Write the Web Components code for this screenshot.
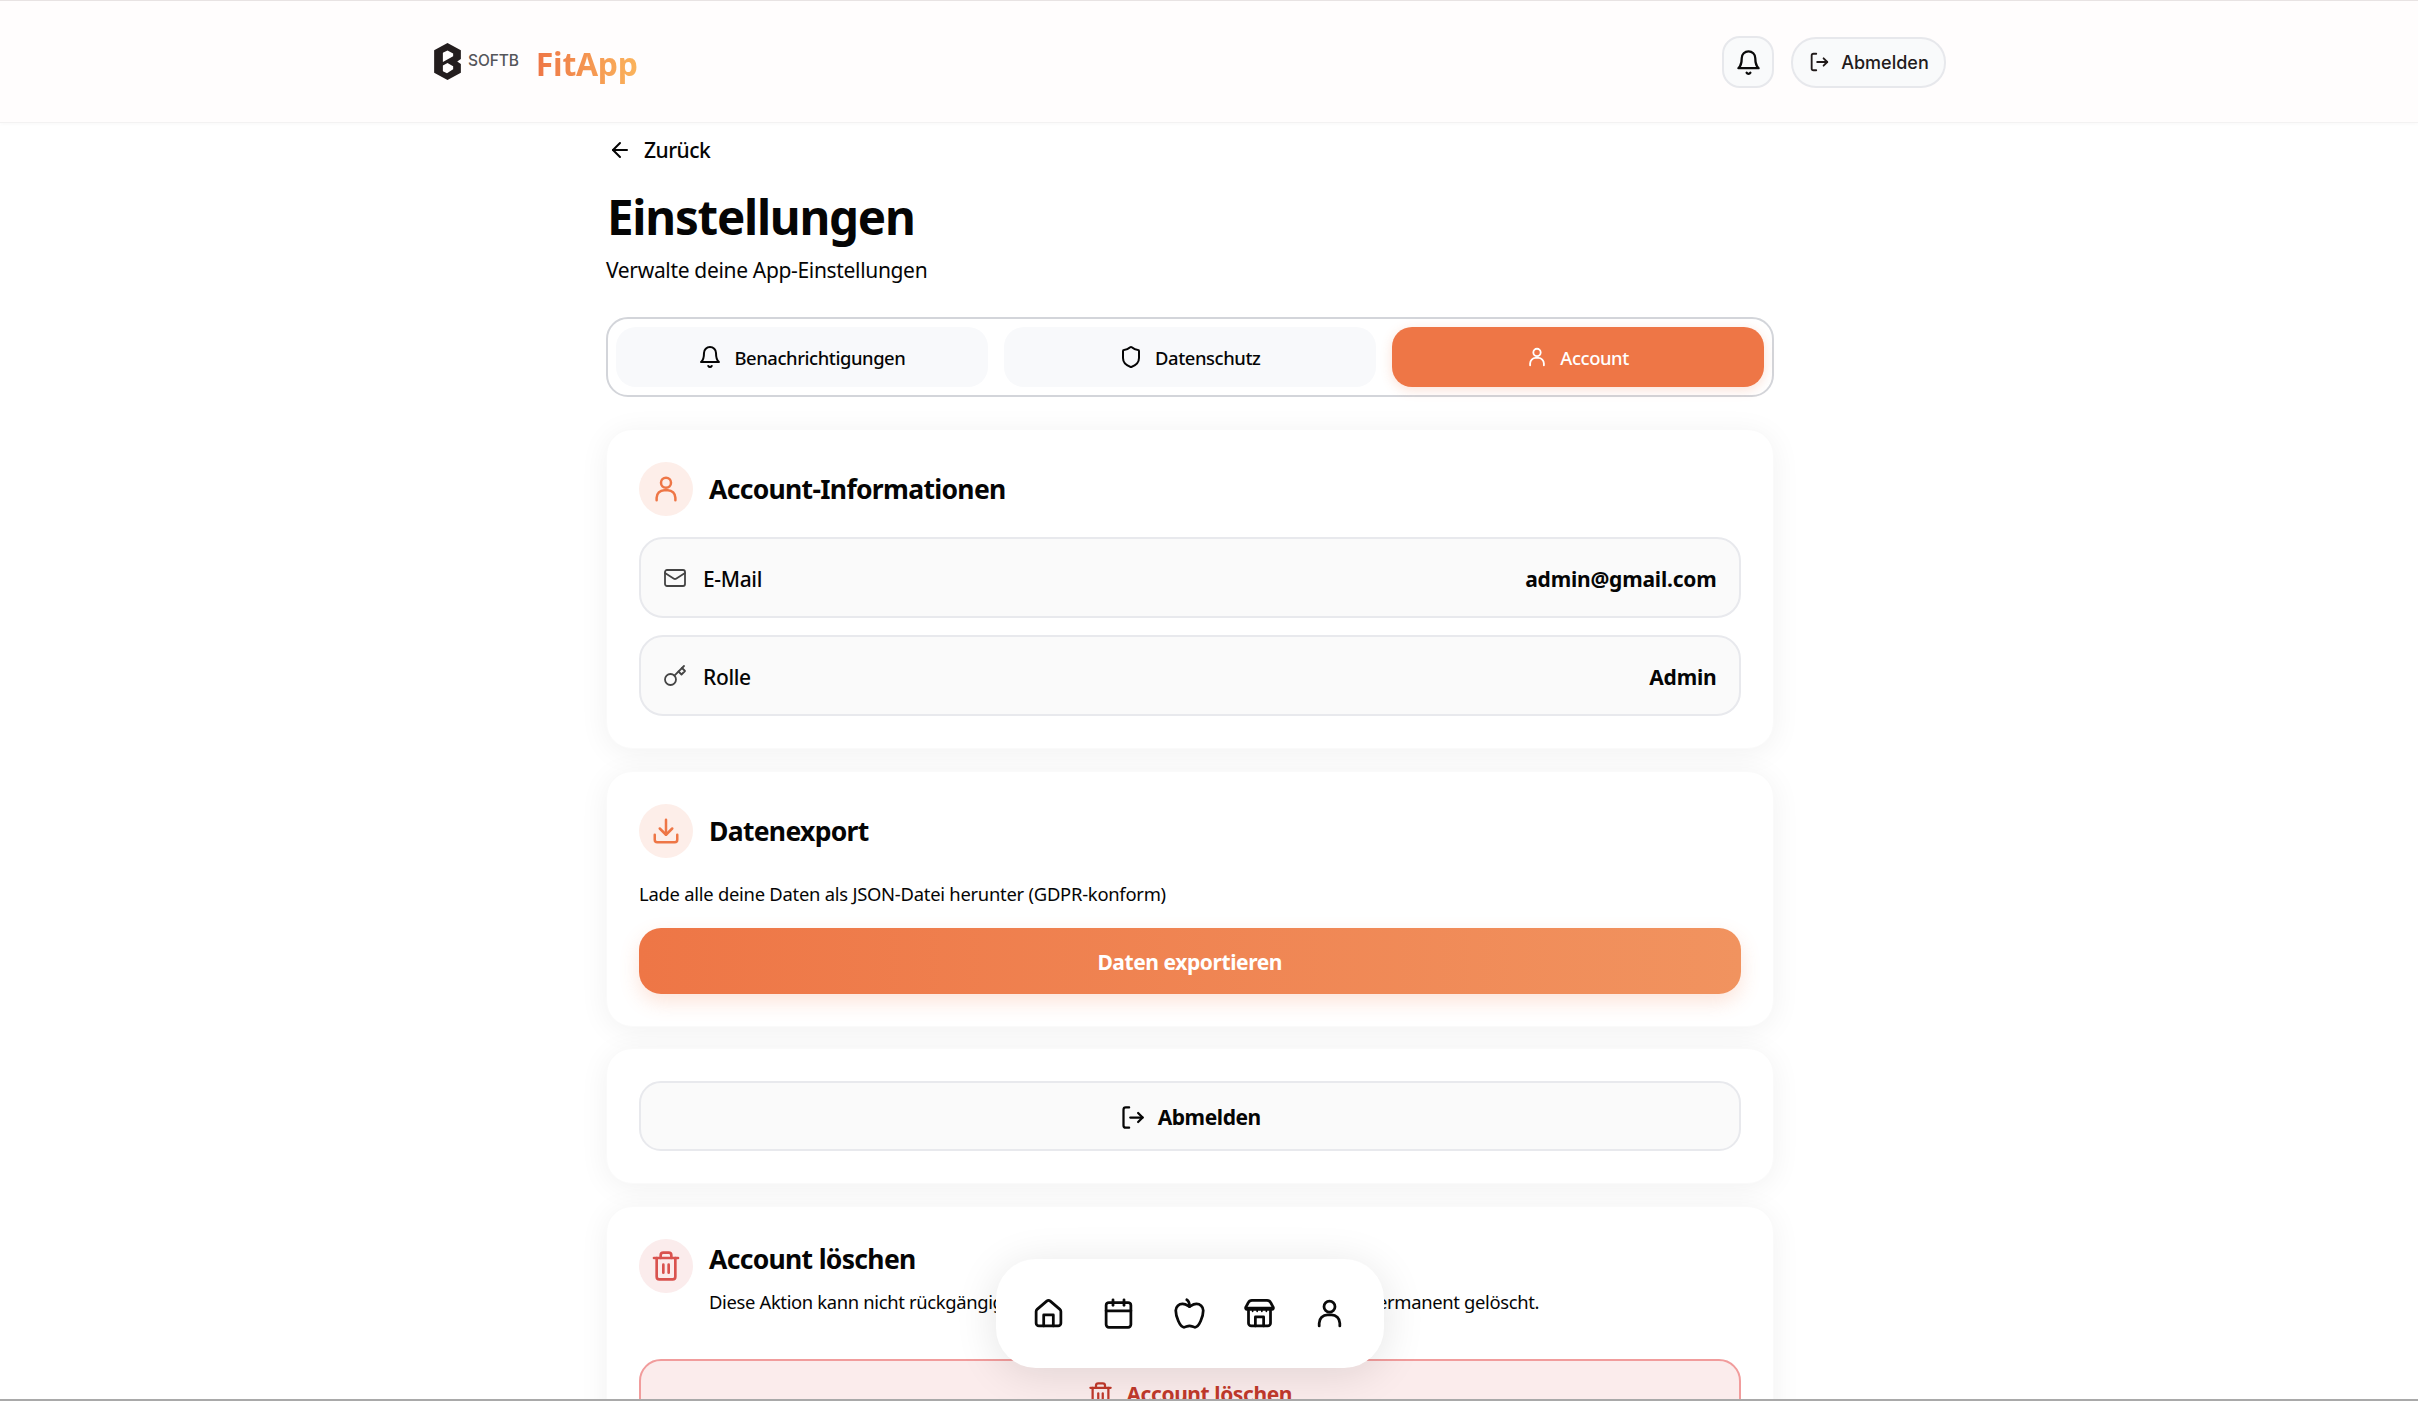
<!DOCTYPE html>
<html lang="de">
<head>
<meta charset="utf-8">
<title>FitApp Einstellungen</title>
<style>
  html, body { margin: 0; height: 1401px; overflow: hidden; background: #fff; }
  body { font-family: "Noto Sans", "Open Sans", sans-serif; color: #050505; }
</style>
</head>
<body>
<fit-header></fit-header>
<settings-page></settings-page>
<bottom-nav></bottom-nav>
<script>
// lucide-artige icons, alle in einem 24er raster
const ICONS = {
  bell: '<path d="M6 8a6 6 0 0 1 12 0c0 7 3 9 3 9H3s3-2 3-9"/><path d="M10.3 21a1.94 1.94 0 0 0 3.4 0"/>',
  shield: '<path d="M20 13c0 5-3.5 7.5-7.66 8.95a1 1 0 0 1-.67-.01C7.5 20.5 4 18 4 13V6a1 1 0 0 1 1-1c2 0 4.5-1.2 6.24-2.72a1.17 1.17 0 0 1 1.52 0C14.51 3.81 17 5 19 5a1 1 0 0 1 1 1z"/>',
  user: '<circle cx="12" cy="7" r="4"/><path d="M4.5 21v-2a6 6 0 0 1 6-6h3a6 6 0 0 1 6 6v2"/>',
  mail: '<rect x="2" y="4" width="20" height="16" rx="2"/><path d="m22 7-8.97 5.7a1.94 1.94 0 0 1-2.06 0L2 7"/>',
  key: '<circle cx="7.5" cy="15.5" r="5.5"/><path d="m21 2-9.6 9.6"/><path d="m15.5 7.5 3 3L22 7l-3-3"/>',
  download: '<path d="M21 15v4a2 2 0 0 1-2 2H5a2 2 0 0 1-2-2v-4"/><path d="m7 10 5 5 5-5"/><path d="M12 15V3"/>',
  logout: '<path d="M9 3H6a2 2 0 0 0-2 2v14a2 2 0 0 0 2 2h3"/><path d="M10 12h11"/><path d="m17 8 4 4-4 4"/>',
  trash: '<path d="M3 6h18"/><path d="M19 6v14a2 2 0 0 1-2 2H7a2 2 0 0 1-2-2V6"/><path d="M8 6V4a2 2 0 0 1 2-2h4a2 2 0 0 1 2 2v2"/><path d="M10 11v6"/><path d="M14 11v6"/>',
  arrow: '<path d="M12 19 5 12l7-7"/><path d="M19 12H5"/>',
  home: '<path d="M3 10.500a2 2 0 0 1 .7-1.500l7-6a2 2 0 0 1 2.600 0l7 6a2 2 0 0 1 .7 1.500V19a2 2 0 0 1-2 2H5a2 2 0 0 1-2-2z"/><path d="M8.500 21v-8h7v8"/>',
  calendar: '<rect x="3" y="4" width="18" height="18" rx="2"/><path d="M16 2v4"/><path d="M8 2v4"/><path d="M3 10h18"/>',
  apple: '<path d="M12 20.940c1.500 0 2.750 1.060 4 1.060 3 0 6-8 6-12.220A4.910 4.910 0 0 0 17 5c-2.220 0-4 1.440-5 2-1-.560-2.780-2-5-2a4.900 4.900 0 0 0-5 4.780C2 14 5 22 8 22c1.250 0 2.500-1.060 4-1.060Z"/><path d="M10 2c1 .5 2 2 2 5"/>',
  // dach mit kleinen zacken am saum
  store: '<path d="M6.500 2.500h11a3 3 0 0 1 2.700 1.700L22 7.500a1 1 0 0 1-1 1.500H3a1 1 0 0 1-1-1.500l1.800-3.300a3 3 0 0 1 2.700-1.700z"/><path d="M2.500 8h19"/><path d="M7 9v1.500M10.300 9v1.500M13.700 9v1.500M17 9v1.500" stroke-width="1.200"/><path d="M4 10v9a2 2 0 0 0 2 2h12a2 2 0 0 0 2-2v-9"/><path d="M9 21v-6.500h6V21"/>'
};

class AppIcon extends HTMLElement {
  connectedCallback() {
    const size = this.getAttribute("size") || 24;
    const stroke = this.getAttribute("stroke") || 2;
    this.attachShadow({ mode: "open" }).innerHTML = `
      <style>
        :host { display: inline-flex; flex: none; width: ${size}px; height: ${size}px; }
        svg { width: 100%; height: 100%; fill: none; stroke: currentColor; stroke-width: ${stroke}; stroke-linecap: round; stroke-linejoin: round; }
      </style>
      <svg viewBox="0 0 24 24">${ICONS[this.getAttribute("name")]}</svg>`;
  }
}

class FitHeader extends HTMLElement {
  constructor() {
    super();
    this.attachShadow({ mode: "open" }).innerHTML = `
    <style>
      :host {
        display: block;
        height: 121px;
        border-top: 1px solid #e8e3e3;
        border-bottom: 1px solid #f3f2f2;
        background: #fffdfd;
        box-shadow: 0 2px 3px rgba(0,0,0,.02);
      }
      .inner {
        width: 1512px;
        height: 100%;
        margin-left: 434px;
        display: flex;
        align-items: center;
        justify-content: space-between;
      }
      .brand { display: flex; align-items: center; }
      .softb {
        font: 500 15.500px Inter, sans-serif;
        color: #55565a;
        margin: 0 17px 3px 7px;
        letter-spacing: -.1px;
      }
      .fit {
        font: 700 32px/1 "Noto Sans", sans-serif;
        letter-spacing: -.3px;
        background: linear-gradient(90deg, #ee7646, #fbb45c);
        -webkit-background-clip: text;
        background-clip: text;
        color: transparent;
        padding: 6px 0 8px;
        margin-top: 7px;
      }
      .actions { display: flex; align-items: center; gap: 17px; margin-top: 1px; }
      .bell, .out {
        box-sizing: border-box;
        display: flex;
        align-items: center;
        justify-content: center;
        height: 52px;
        border: 2px solid #e7e8ec;
        background: #f9fafb;
      }
      .bell { width: 52px; border-radius: 18px; color: #0a0a0a; }
      .out {
        width: 155px;
        height: 51px;
        border-radius: 25px;
        gap: 11px;
        font: 500 18px Inter, sans-serif;
        color: #221b1b;
      }
    </style>
    <div class="inner">
      <div class="brand">
        <svg width="27" height="37" viewBox="0 0 26 36" aria-hidden="true">
          <path fill="#231d1e" fill-rule="evenodd" d="M13 0 26 7v8.500L22.500 18 26 20.500V29l-13 7-13-7V7zM8.500 9.500V18.500L18.500 13V10.200L13 7.200zM8.500 22V27.500L12.500 29.500 18.500 25.500V22.500L13 19.500z"/>
        </svg>
        <span class="softb">SOFTB</span>
        <span class="fit">FitApp</span>
      </div>
      <div class="actions">
        <div class="bell"><app-icon name="bell" size="27" stroke="2"></app-icon></div>
        <div class="out"><app-icon name="logout" size="22" stroke="2"></app-icon><span>Abmelden</span></div>
      </div>
    </div>`;
  }
}

class TabButton extends HTMLElement {
  constructor() {
    super();
    this.attachShadow({ mode: "open" }).innerHTML = `
    <style>
      :host {
        display: flex;
        align-items: center;
        justify-content: center;
        gap: 12px;
        height: 60px;
        border-radius: 20px;
        background: #f8f9fb;
        font-size: 18.400px;
        font-weight: 500;
        letter-spacing: -.42px;
        color: #050505;
      }
      :host([active]) {
        background: #ee7646;
        color: #fff;
        box-shadow: 0 3px 12px rgba(238,118,70,.22);
      }
    </style>
    <slot name="icon"></slot><slot></slot>`;
  }
}

class SettingsTabs extends HTMLElement {
  constructor() {
    super();
    this.attachShadow({ mode: "open" }).innerHTML = `
    <style>
      :host {
        display: grid;
        grid-template-columns: repeat(3, 1fr);
        gap: 16px;
        box-sizing: border-box;
        height: 80px;
        padding: 8px;
        border: 2px solid #d3d5da;
        border-radius: 22px;
        background: #fff;
      }
    </style>
    <slot></slot>`;
  }
}

class SettingsCard extends HTMLElement {
  constructor() {
    super();
    this.attachShadow({ mode: "open" }).innerHTML = `
    <style>
      :host {
        display: block;
        box-sizing: border-box;
        padding: 32px;
        border: 1px solid #fafafa;
        border-radius: 26px;
        background: #fff;
        box-shadow: 0 4px 30px rgba(0,0,0,.06);
      }
      .head { display: flex; align-items: center; gap: 16px; }
      :host([danger]) .head { align-items: flex-start; }
      .badge {
        width: 54px;
        height: 54px;
        flex: none;
        border-radius: 50%;
        display: flex;
        align-items: center;
        justify-content: center;
        background: #fdeee9;
        color: #ee7646;
      }
      :host([danger]) .badge { background: #fbecec; color: #d9534f; }
      h2 {
        margin: 0;
        font-size: 26.500px;
        font-weight: 700;
        letter-spacing: -.68px;
        line-height: 40px;
        color: #050505;
      }
      :host(:not([heading])) .head { display: none; }
    </style>
    <div class="head">
      <div class="badge"><slot name="icon"></slot></div>
      <div>
        <h2>${this.getAttribute("heading") || ""}</h2>
        <slot name="note"></slot>
      </div>
    </div>
    <slot></slot>`;
  }
}

class InfoRow extends HTMLElement {
  constructor() {
    super();
    this.attachShadow({ mode: "open" }).innerHTML = `
    <style>
      :host {
        display: flex;
        align-items: center;
        gap: 16px;
        box-sizing: border-box;
        height: 81px;
        padding: 2px 22px 0;
        border: 2px solid #e8e9ed;
        border-radius: 24px;
        background: #fafafa;
        font-size: 21px;
        letter-spacing: -.35px;
        font-weight: 500;
        color: #050505;
      }
      .value { margin-left: auto; font-weight: 700; letter-spacing: -.2px; }
      ::slotted(app-icon) { color: #444; margin-top: -2px; }
    </style>
    <slot name="icon"></slot>
    <span>${this.getAttribute("label")}</span>
    <span class="value">${this.getAttribute("value")}</span>`;
  }
}

class ActionButton extends HTMLElement {
  constructor() {
    super();
    this.attachShadow({ mode: "open" }).innerHTML = `
    <style>
      :host {
        display: flex;
        align-items: center;
        justify-content: center;
        gap: 12px;
        box-sizing: border-box;
        height: 66px;
        padding-top: 2px;
        border-radius: 22px;
        font-size: 21px;
        font-weight: 700;
        letter-spacing: -.42px;
      }
      :host([kind="primary"]) {
        background: linear-gradient(90deg, #ee7646, #f1935f);
        color: #fff;
        box-shadow: 0 8px 20px rgba(238,118,70,.2);
      }
      :host([kind="plain"]) {
        height: 70px;
        border: 2px solid #e8e9ed;
        background: #fafafa;
        color: #050505;
      }
      :host([kind="danger"]) {
        height: 69px;
        border: 2px solid #f19c9c;
        background: #fbecec;
        color: #c0392b;
      }
    </style>
    <slot name="icon"></slot><slot></slot>`;
  }
}

class SettingsPage extends HTMLElement {
  constructor() {
    super();
    this.attachShadow({ mode: "open" }).innerHTML = `
    <style>
      :host {
        display: block;
        width: 1167.500px;
        margin-left: 606px;
      }
      .back {
        display: flex;
        align-items: center;
        gap: 12px;
        height: 32px;
        margin: 11px 0 0 2px;
        font-size: 21px;
        font-weight: 500;
        letter-spacing: -.5px;
      }
      h1 {
        margin: 19px 0 0 1px;
        font-size: 47.500px;
        line-height: 64px;
        font-weight: 700;
        letter-spacing: -1.250px;
      }
      .sub {
        margin: 5px 0 0;
        font-size: 21px;
        line-height: 32px;
        letter-spacing: -.33px;
      }
      settings-tabs { margin-top: 31px; }
      .cards { display: flex; flex-direction: column; gap: 21.500px; margin-top: 32px; }
      .rows { display: flex; flex-direction: column; gap: 17px; margin-top: 21px; }
      .desc { margin: 26px 0 24px; font-size: 18.400px; line-height: 20px; letter-spacing: -.25px; }
      .note { display: block; font-size: 18.400px; line-height: 26px; margin-top: 10px; letter-spacing: -.34px; }
      .danger-btn { margin-top: 44px; }
    </style>
    <div class="back"><app-icon name="arrow" size="24" stroke="2"></app-icon><span>Zurück</span></div>
    <h1>Einstellungen</h1>
    <p class="sub">Verwalte deine App-Einstellungen</p>

    <settings-tabs>
      <tab-button><app-icon slot="icon" name="bell" size="24"></app-icon>Benachrichtigungen</tab-button>
      <tab-button><app-icon slot="icon" name="shield" size="24"></app-icon>Datenschutz</tab-button>
      <tab-button active><app-icon slot="icon" name="user" size="22"></app-icon>Account</tab-button>
    </settings-tabs>

    <div class="cards">
      <settings-card heading="Account-Informationen">
        <app-icon slot="icon" name="user" size="30"></app-icon>
        <div class="rows">
          <info-row label="E-Mail" value="admin@gmail.com"><app-icon slot="icon" name="mail" size="24" stroke="1.8"></app-icon></info-row>
          <info-row label="Rolle" value="Admin"><app-icon slot="icon" name="key" size="24" stroke="1.8"></app-icon></info-row>
        </div>
      </settings-card>

      <settings-card heading="Datenexport">
        <app-icon slot="icon" name="download" size="30"></app-icon>
        <p class="desc">Lade alle deine Daten als JSON-Datei herunter (GDPR-konform)</p>
        <action-button kind="primary">Daten exportieren</action-button>
      </settings-card>

      <settings-card>
        <action-button kind="plain"><app-icon slot="icon" name="logout" size="27"></app-icon>Abmelden</action-button>
      </settings-card>

      <settings-card heading="Account löschen" danger>
        <app-icon slot="icon" name="trash" size="32"></app-icon>
        <span slot="note" class="note">Diese Aktion kann nicht rückgängig gemacht werden. Alle deine Daten werden permanent gelöscht.</span>
        <action-button class="danger-btn" kind="danger"><app-icon slot="icon" name="trash" size="27"></app-icon>Account löschen</action-button>
      </settings-card>
    </div>`;
  }
}

class BottomNav extends HTMLElement {
  constructor() {
    super();
    const names = ["home", "calendar", "apple", "store", "user"];
    this.attachShadow({ mode: "open" }).innerHTML = `
    <style>
      :host {
        position: fixed;
        left: 996px;
        top: 1259px;
        box-sizing: border-box;
        width: 388px;
        height: 109px;
        padding: 0 38px 0 36px;
        display: flex;
        align-items: center;
        justify-content: space-between;
        border-radius: 40px;
        background: #fff;
        color: #0a0a0a;
        box-shadow: 0 6px 44px rgba(0,0,0,.11);
      }
      .shade { position: fixed; left: 0; right: 0; bottom: 0; height: 2px; background: #a9a9a9; }
    </style>
    ${names.map((n) => `<app-icon name="${n}" size="33" stroke="2"></app-icon>`).join("")}
    <div class="shade"></div>`;
  }
}

// eigene elemente registrieren, innere zuerst
customElements.define("app-icon", AppIcon);
customElements.define("tab-button", TabButton);
customElements.define("settings-tabs", SettingsTabs);
customElements.define("info-row", InfoRow);
customElements.define("action-button", ActionButton);
customElements.define("settings-card", SettingsCard);
customElements.define("fit-header", FitHeader);
customElements.define("settings-page", SettingsPage);
customElements.define("bottom-nav", BottomNav);
</script>
</body>
</html>
